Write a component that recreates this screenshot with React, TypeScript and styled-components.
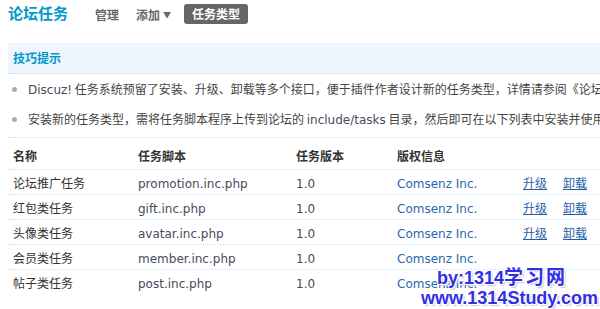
import React from 'react'
import styled, { createGlobalStyle } from 'styled-components'

const GlobalStyle = createGlobalStyle`
  html, body {
    margin: 0;
    padding: 0;
    background: #fff;
    overflow: hidden;
  }
  body {
    font: 12px "DejaVu Sans", "Noto Sans CJK SC", sans-serif;
    color: #333;
  }
`

const tasks = [
  { name: '论坛推广任务', file: 'promotion.inc.php', ver: '1.0', actions: true },
  { name: '红包类任务', file: 'gift.inc.php', ver: '1.0', actions: true },
  { name: '头像类任务', file: 'avatar.inc.php', ver: '1.0', actions: true },
  { name: '会员类任务', file: 'member.inc.php', ver: '1.0', actions: false },
  { name: '帖子类任务', file: 'post.inc.php', ver: '1.0', actions: false },
]

const App = () => {
  return (
    <Page>
      <GlobalStyle />
      <TopBar>
        <Title>论坛任务</Title>
        <NavItem>管理</NavItem>
        <NavItem>
          添加<Arrow>▼</Arrow>
        </NavItem>
        <Tab>任务类型</Tab>
      </TopBar>

      <TipBox>
        <TipHead>技巧提示</TipHead>
        <TipList>
          <TipItem>
            <Latin>Discuz!</Latin> 任务系统预留了安装、升级、卸载等多个接口，便于插件作者设计新的任务类型，详情请参阅《论坛任务开发手册》
          </TipItem>
          <TipItem>
            安装新的任务类型，需将任务脚本程序上传到论坛的 <Latin>include/tasks</Latin> 目录，然后即可在以下列表中安装并使用了
          </TipItem>
        </TipList>
      </TipBox>

      <Table>
        <HeadRow>
          <HeadCell>名称</HeadCell>
          <HeadCell>任务脚本</HeadCell>
          <HeadCell>任务版本</HeadCell>
          <HeadCell>版权信息</HeadCell>
          <HeadCell />
          <HeadCell />
        </HeadRow>
        {tasks.map((t) => (
          <Row key={t.file}>
            <Cell>{t.name}</Cell>
            <Cell><Latin>{t.file}</Latin></Cell>
            <Cell><Latin>{t.ver}</Latin></Cell>
            <Cell><Latin $blue>Comsenz Inc.</Latin></Cell>
            <Cell>{t.actions && <Link>升级</Link>}</Cell>
            <Cell>{t.actions && <Link>卸载</Link>}</Cell>
          </Row>
        ))}
      </Table>

      <Watermark>
        <MarkLine $indent={16}>
          by:1314<Wide>学习网</Wide>
        </MarkLine>
        <MarkLine $indent={0}>www.1314Study.com</MarkLine>
      </Watermark>
    </Page>
  )
}

export default App

const Page = styled.div`
  position: relative;
  width: 760px;
  height: 309px;
  padding-left: 8px;
`

const TopBar = styled.div`
  display: flex;
  align-items: center;
  height: 20px;
  padding-top: 4px;
  font-family: "Noto Sans CJK SC", sans-serif;
`

const Title = styled.div`
  font-size: 15px;
  font-weight: bold;
  color: #0099cc;
  width: 87px;
  margin-top: -4px;
`

const NavItem = styled.div`
  display: flex;
  align-items: center;
  font-size: 12px;
  font-weight: bold;
  color: #666;
  margin-right: 17px;
`

const Arrow = styled.span`
  font-size: 8px;
  margin-left: 3px;
`

const Tab = styled.div`
  height: 20px;
  line-height: 20px;
  padding: 0 8px;
  margin-left: -4px;
  background: #666;
  color: #fff;
  font-weight: bold;
  font-size: 12px;
  border-radius: 3px;
`

const TipBox = styled.div`
  margin-top: 19px;
  border-bottom: 1px dotted #c8def2;
  padding-bottom: 3px;
`

const TipHead = styled.div`
  height: 30px;
  line-height: 29px;
  padding-left: 5px;
  background: #eef5fc;
  border-bottom: 1px dotted #c4ddf3;
  color: #0099cc;
  font-weight: bold;
  font-family: "Noto Sans CJK SC", sans-serif;
`

const TipList = styled.ul`
  list-style: none;
  margin: 0;
  padding: 0;
`

const TipItem = styled.li`
  position: relative;
  height: 30px;
  line-height: 30px;
  padding-left: 20px;
  white-space: nowrap;
  font-family: "Noto Sans CJK SC", sans-serif;
  color: #444;

  &::before {
    content: '';
    position: absolute;
    left: 4px;
    top: 13px;
    width: 5px;
    height: 5px;
    border-radius: 50%;
    background: #aaa;
  }
`

const Latin = styled.span<{ $blue?: boolean }>`
  font-family: "DejaVu Sans", sans-serif;
  color: ${({ $blue }) => ($blue ? '#2a68ad' : '#4a4a5a')};
`

const Table = styled.div`
  margin-top: 3px;
  font-family: "Noto Sans CJK SC", sans-serif;
`

const HeadRow = styled.div`
  display: grid;
  grid-template-columns: 125px 158px 101px 126px 40px 1fr;
  height: 28px;
  align-items: center;
`

const Row = styled(HeadRow)`
  height: 24px;
  border-top: 1px dotted #cfe2f3;
`

const HeadCell = styled.div`
  padding-left: 5px;
  font-weight: bold;
  color: #333;
`

const Cell = styled.div`
  padding-left: 5px;
  color: #333;
  white-space: nowrap;
`

const Link = styled.a`
  color: #1f5fa5;
  text-decoration: underline;
  cursor: pointer;
`

const Watermark = styled.div`
  position: absolute;
  left: 421px;
  top: 268px;
  font-family: "Liberation Sans", "Noto Sans CJK SC", sans-serif;
  font-weight: bold;
  font-size: 18px;
  line-height: 20px;
  color: #2f2fe6;
  text-shadow:
    1px 1px 0 #fff, -1px -1px 0 #fff, 1px -1px 0 #fff, -1px 1px 0 #fff,
    2px 2px 1px #ccd;
`

const MarkLine = styled.div<{ $indent: number }>`
  padding-left: ${({ $indent }) => $indent}px;
  white-space: nowrap;
`

const Wide = styled.span`
  font-size: 19px;
  letter-spacing: 2px;
`
